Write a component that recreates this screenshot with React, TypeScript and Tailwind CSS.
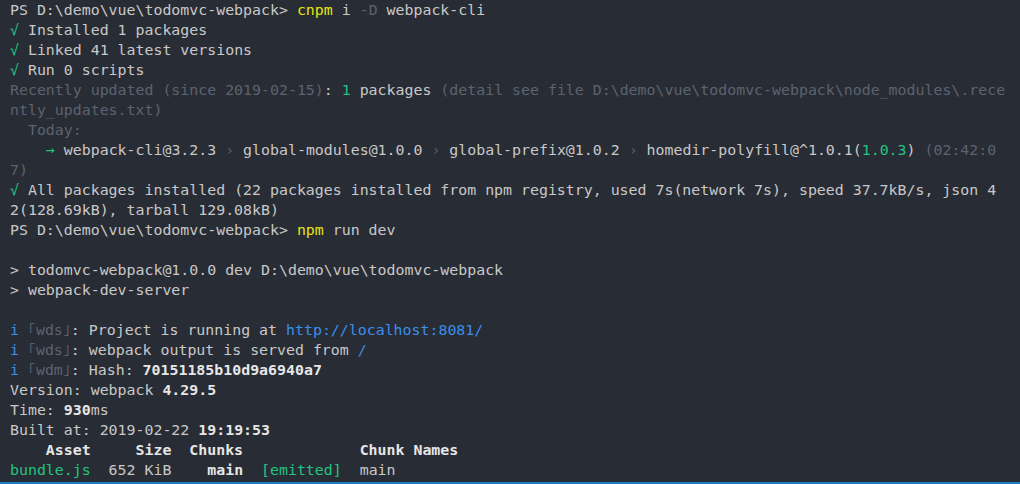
const G = "text-[#5c6370]";
const OK = "text-[#23c482]";
const Y = "text-[#e5e510]";
const B = "text-[#3b8eea]";
const W = "font-bold text-[#e6e6e6]";

type Seg = [string, string?];

const lines: Seg[][] = [
  [["PS D:\\demo\\vue\\todomvc-webpack> "], ["cnpm", Y], [" i "], ["-D", G], [" webpack-cli"]],
  [["√", OK], [" Installed 1 packages"]],
  [["√", OK], [" Linked 41 latest versions"]],
  [["√", OK], [" Run 0 scripts"]],
  [
    ["Recently updated (since 2019-02-15)", G],
    [": "],
    ["1", OK],
    [" packages "],
    ["(detail see file D:\\demo\\vue\\todomvc-webpack\\node_modules\\.rece", G],
  ],
  [["ntly_updates.txt)", G]],
  [["  Today:", G]],
  [
    ["    "],
    ["→", OK],
    [" webpack-cli@3.2.3 "],
    ["›", G],
    [" global-modules@1.0.0 "],
    ["›", G],
    [" global-prefix@1.0.2 "],
    ["›", G],
    [" homedir-polyfill@^1.0.1("],
    ["1.0.3", OK],
    [") "],
    ["(02:42:0", G],
  ],
  [["7)", G]],
  [["√", OK], [" All packages installed (22 packages installed from npm registry, used 7s(network 7s), speed 37.7kB/s, json 4"]],
  [["2(128.69kB), tarball 129.08kB)"]],
  [["PS D:\\demo\\vue\\todomvc-webpack> "], ["npm", Y], [" run dev"]],
  [[""]],
  [["> todomvc-webpack@1.0.0 dev D:\\demo\\vue\\todomvc-webpack"]],
  [["> webpack-dev-server"]],
  [[""]],
  [["i ", B], ["｢wds｣", G], [": Project is running at "], ["http://localhost:8081/", B]],
  [["i ", B], ["｢wds｣", G], [": webpack output is served from "], ["/", B]],
  [["i ", B], ["｢wdm｣", G], [": Hash: "], ["70151185b10d9a6940a7", W]],
  [["Version: webpack "], ["4.29.5", W]],
  [["Time: "], ["930", W], ["ms"]],
  [["Built at: 2019-02-22 "], ["19:19:53", W]],
  [["    Asset     Size  Chunks             Chunk Names", W]],
  [["bundle.js", OK], ["  652 KiB    "], ["main", W], ["  "], ["[emitted]", OK], ["  main"]],
];

export default function App() {
  return (
    <div className="h-[484px] w-full overflow-hidden bg-[#282c34] border-b-2 border-[#1d7fc5]">
      <div className="pl-[10px] text-[14.9px] leading-[20px] text-[#c8c8c8] whitespace-pre" style={{ fontFamily: '"DejaVu Sans Mono", "Liberation Mono", monospace' }}>
        {lines.map((line, i) => (
          <div key={i} className="h-[20px]">
            {line.map(([text, cls], j) => (
              <span key={j} className={cls}>
                {text}
              </span>
            ))}
          </div>
        ))}
      </div>
    </div>
  );
}
